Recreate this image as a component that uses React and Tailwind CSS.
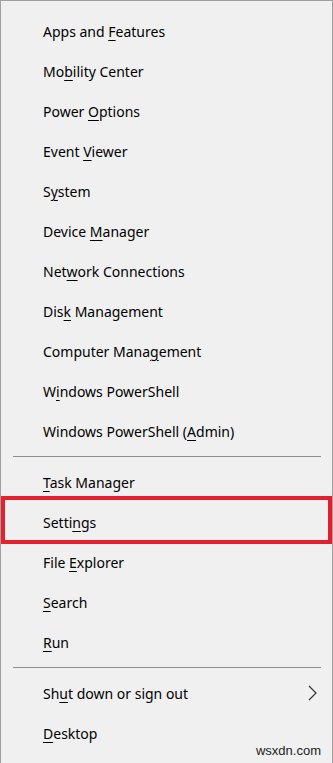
import React from "react";

// Win+X menu items, key = access-key letter index
const GROUP_ONE = [
  ["Apps and ", "F", "eatures"],
  ["Mo", "b", "ility Center"],
  ["Power ", "O", "ptions"],
  ["Event ", "V", "iewer"],
  ["S", "y", "stem"],
  ["Device ", "M", "anager"],
  ["Net", "w", "ork Connections"],
  ["Dis", "k", " Management"],
  ["Computer Mana", "g", "ement"],
  ["W", "i", "ndows PowerShell"],
  ["Windows PowerShell (", "A", "dmin)"],
];

const GROUP_TWO = [
  ["", "T", "ask Manager"],
  ["Setti", "n", "gs"],
  ["File ", "E", "xplorer"],
  ["", "S", "earch"],
  ["", "R", "un"],
];

function Label({ parts }) {
  const [before, key, after] = parts;
  return (
    <span>
      {before}
      <u className="underline decoration-1 underline-offset-[3px]">{key}</u>
      {after}
    </span>
  );
}

function Row({ parts, highlight, chevron }) {
  return (
    <div className="relative h-10 flex items-center pl-[42px] pr-3">
      <Label parts={parts} />
      {chevron && (
        <svg className="ml-auto mr-[2px] w-3 h-4" viewBox="0 0 12 16" fill="none">
          <path d="M3 1l7 7-7 7" stroke="#333" strokeWidth="1.2" />
        </svg>
      )}
      {highlight && (
        <div className="absolute left-0 right-0 top-[-6px] bottom-[-2px] border-4 border-[#e5202e]" />
      )}
    </div>
  );
}

function Divider() {
  return (
    <div className="h-[11px] flex items-center pl-3 pr-[11px]">
      <div className="h-px w-full bg-[#8e8e8e]" />
    </div>
  );
}

export default function App() {
  return (
    <div
      className="relative w-[333px] h-[763px] bg-[#f0f0f0] border border-b-0 border-[#a0a0a0] pt-[10px] text-[14px] text-black"
      style={{ fontFamily: '"Noto Sans", sans-serif' }}
    >
      {GROUP_ONE.map((p) => (
        <Row key={p.join("")} parts={p} />
      ))}
      <Divider />
      {GROUP_TWO.map((p) => (
        <Row key={p.join("")} parts={p} highlight={p[0] === "Setti"} />
      ))}
      <Divider />
      <Row parts={["Sh", "u", "t down or sign out"]} chevron />
      <Row parts={["", "D", "esktop"]} />
      <div
        className="absolute right-[11px] bottom-[3px] text-[13px] text-[#222]"
        style={{ fontFamily: '"Liberation Sans", sans-serif' }}
      >
        wsxdn.com
      </div>
    </div>
  );
}
